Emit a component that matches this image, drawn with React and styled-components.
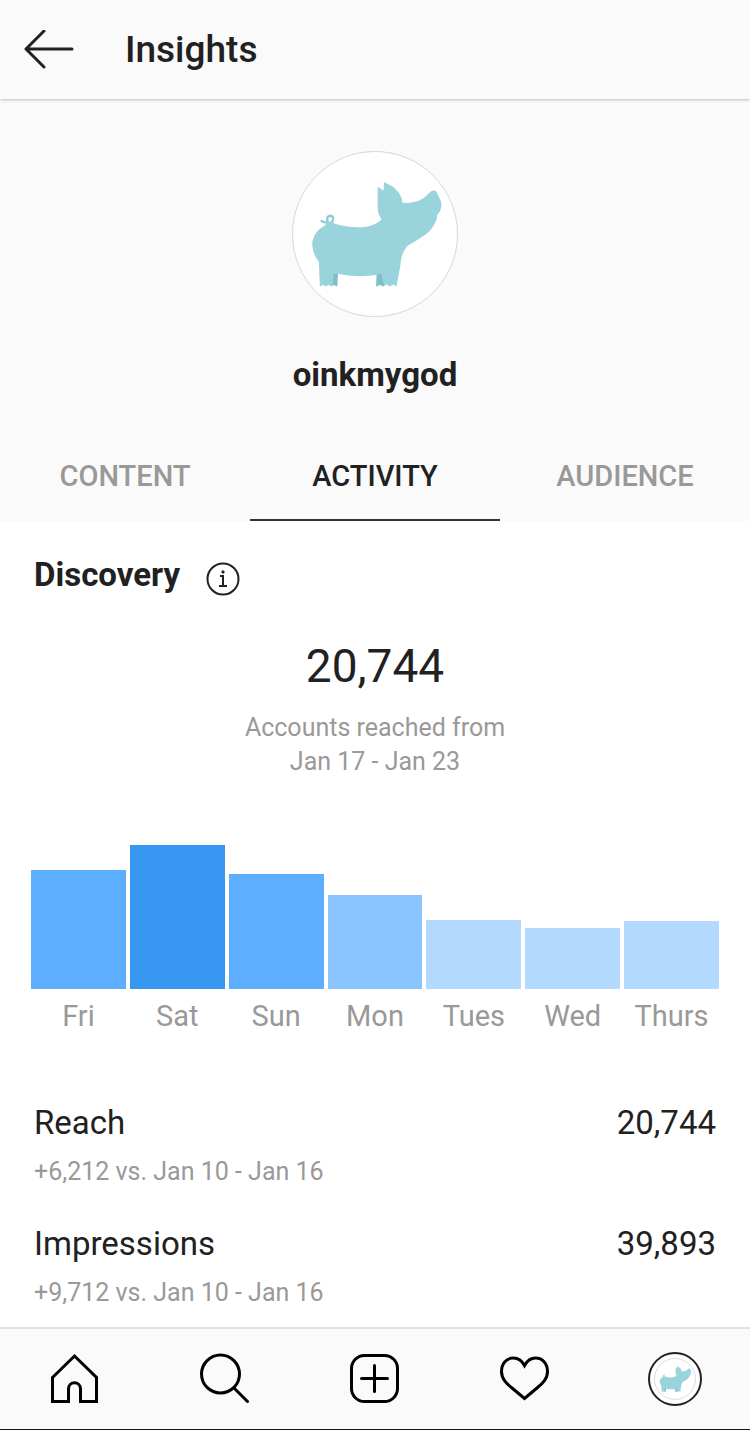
import React, { useState } from "react";
import styled, { createGlobalStyle } from "styled-components";

const GlobalStyle = createGlobalStyle`
  * {
    box-sizing: border-box;
  }
  body {
    margin: 0;
    background: #fff;
    color: #212121;
    font-family: Roboto, "Liberation Sans", sans-serif;
  }
  button {
    border: 0;
    padding: 0;
    background: none;
    color: inherit;
    font-family: inherit;
    cursor: pointer;
  }
  svg {
    display: block;
  }
`;

const Screen = styled.div`
  display: flex;
  flex-direction: column;
  min-height: 100vh;
`;

const Header = styled.header`
  display: flex;
  align-items: center;
  gap: 49px;
  height: 99px;
  padding: 0 24px;
  background: #fafafa;
  box-shadow: 0 1px 3px rgba(0, 0, 0, 0.24);
  z-index: 1;
`;

const Title = styled.h1`
  margin: 0;
  font-size: 37px;
  font-weight: 500;
  line-height: 48px;
`;

const Profile = styled.section`
  display: flex;
  flex-direction: column;
  align-items: center;
  gap: 36px;
  padding: 52px 0 34px;
  background: #fafafa;
`;

const Avatar = styled.div`
  width: 166px;
  height: 166px;
  border: 1px solid #d8d8d8;
  border-radius: 50%;
  background: #fff;
`;

const Username = styled.h2`
  margin: 0;
  font-size: 33px;
  font-weight: 700;
  line-height: 44px;
`;

const Tabs = styled.nav`
  display: grid;
  grid-template-columns: repeat(3, 1fr);
  background: #fafafa;
`;

const Tab = styled.button`
  height: 90px;
  padding-top: 2px;
  border-bottom: 2px solid ${props => (props.$active ? "#333" : "transparent")};
  color: ${props => (props.$active ? "#212121" : "#999")};
  font-size: 29px;
  font-weight: 500;
`;

const Content = styled.main`
  padding: 30px 31px 17px;
`;

const SectionHead = styled.div`
  display: flex;
  align-items: center;
  gap: 26px;
  padding-left: 3px;
`;

const SectionTitle = styled.h3`
  margin: 0;
  font-size: 33px;
  font-weight: 700;
  line-height: 48px;
`;

const InfoButton = styled.button`
  padding-top: 8px;
`;

const Summary = styled.div`
  padding: 35px 0 66px;
  text-align: center;
`;

const Total = styled.div`
  font-size: 46px;
  line-height: 64px;
`;

const Caption = styled.p`
  margin: 13px 0 0;
  color: #999;
  font-size: 25px;
  line-height: 34px;
`;

const Chart = styled.div`
  display: grid;
  grid-template-columns: repeat(7, 1fr);
  gap: 4px;
`;

const Day = styled.div`
  display: flex;
  flex-direction: column;
  justify-content: flex-end;
  height: 188px;
`;

const Bar = styled.div`
  background: ${props => props.$color};
`;

const DayLabel = styled.span`
  padding-top: 10px;
  color: #999;
  font-size: 29px;
  line-height: 34px;
  text-align: center;
`;

const Stats = styled.div`
  display: flex;
  flex-direction: column;
  gap: 33px;
  padding: 68px 3px 0;
`;

const StatRow = styled.div`
  display: flex;
  justify-content: space-between;
  font-size: 33px;
  line-height: 44px;
`;

const StatNote = styled.div`
  padding-top: 10px;
  color: #999;
  font-size: 25px;
  line-height: 34px;
`;

const BottomNav = styled.nav`
  display: grid;
  grid-template-columns: repeat(5, 1fr);
  height: 103px;
  margin-top: auto;
  border-top: 2px solid #e2e2e2;
  border-bottom: 1px solid #111;
  background: #fafafa;
`;

const NavButton = styled.button`
  display: flex;
  align-items: center;
  justify-content: center;
  color: #000;
`;

const ProfileRing = styled.span`
  display: grid;
  place-items: center;
  width: 54px;
  height: 54px;
  border: 2px solid #222;
  border-radius: 50%;
  background: #fff;
`;

const SmallAvatar = styled.span`
  width: 42px;
  height: 42px;
  border: 1px solid #ddd;
  border-radius: 50%;
`;

const days = [
  { name: "Fri", height: 119, color: "#5eaeff" },
  { name: "Sat", height: 144, color: "#3897f0" },
  { name: "Sun", height: 115, color: "#5eaeff" },
  { name: "Mon", height: 94, color: "#89c4ff" },
  { name: "Tues", height: 69, color: "#b3d9ff" },
  { name: "Wed", height: 61, color: "#b3d9ff" },
  { name: "Thurs", height: 68, color: "#b3d9ff" }
];

const stats = [
  { name: "Reach", value: "20,744", note: "+6,212 vs. Jan 10 - Jan 16" },
  { name: "Impressions", value: "39,893", note: "+9,712 vs. Jan 10 - Jan 16" }
];

const Pig = () => (
  <svg viewBox="38 35 494 494" width="100%" height="100%" aria-hidden="true">
    <path
      d="M122 241 Q132 250 146 245 M144 250 C137 236 142 227 151 227 C162 229 161 241 153 248"
      fill="none"
      stroke="#8fcbd5"
      strokeWidth="7"
    />
    <path
      d="M133 257 C140 250 144 243 151 245 C161 247 162 250 169 253 C198 262 235 264 258 260 C276 257 291 250 305 238 C294 222 292 210 293 194 L293 140 L311 151 L312 126 C340 136 366 158 368 188 C391 190 421 184 438 168 L453 154 C463 147 471 152 474 162 L484 184 C486 196 484 206 480 215 C471 222 472 232 470 240 C462 258 452 275 434 286 C415 299 399 309 384 317 C371 331 363 351 362 372 C359 393 354 414 350 440 L340 434 L330 440 L320 434 L309 440 L300 435 L289 440 L290 405 C252 412 209 410 173 402 L171 440 L161 435 L153 440 L145 435 L137 440 L128 435 L119 440 L116 366 C101 346 93 324 97 303 C101 282 115 266 133 257 Z"
      fill="#99d3dc"
    />
    <path
      d="M160 402 L173 402 L171 440 L161 435 L155 439 C160 427 160 415 160 402 M290 405 L304 400 C307 414 309 423 313 437 L309 440 L300 435 L289 440 Z"
      fill="#82bdc8"
    />
  </svg>
);

const BackIcon = () => (
  <svg width="52" height="40" fill="none" stroke="#212121" strokeWidth="3" strokeLinecap="round" strokeLinejoin="round">
    <path d="M20 1 L2 19 L20 37 M2 19 H48" />
  </svg>
);

const InfoIcon = () => (
  <svg width="34" height="34" fill="none" stroke="#212121" strokeWidth="2">
    <circle cx="17" cy="17" r="15.5" />
    <path d="M14 14 H17 V24 M13 24 H21" />
    <circle cx="17" cy="10" r="1.2" fill="#212121" stroke="#212121" strokeWidth="1" />
  </svg>
);

const NavIcon = ({ children }) => (
  <svg width="54" height="54" fill="none" stroke="currentColor" strokeWidth="3" strokeLinecap="round" strokeLinejoin="round">
    {children}
  </svg>
);

export default function App() {
  const [tab, setTab] = useState("ACTIVITY");

  return (
    <Screen>
      <GlobalStyle />
      <Header>
        <button aria-label="Back">
          <BackIcon />
        </button>
        <Title>Insights</Title>
      </Header>
      <Profile>
        <Avatar>
          <Pig />
        </Avatar>
        <Username>oinkmygod</Username>
      </Profile>
      <Tabs>
        {["CONTENT", "ACTIVITY", "AUDIENCE"].map(name => (
          <Tab key={name} $active={tab === name} onClick={() => setTab(name)}>
            {name}
          </Tab>
        ))}
      </Tabs>
      <Content>
        <SectionHead>
          <SectionTitle>Discovery</SectionTitle>
          <InfoButton aria-label="About discovery">
            <InfoIcon />
          </InfoButton>
        </SectionHead>
        <Summary>
          <Total>20,744</Total>
          <Caption>
            Accounts reached from
            <br />
            Jan 17 - Jan 23
          </Caption>
        </Summary>
        <Chart>
          {days.map(day => (
            <Day key={day.name}>
              <Bar $color={day.color} style={{ height: day.height }} />
              <DayLabel>{day.name}</DayLabel>
            </Day>
          ))}
        </Chart>
        <Stats>
          {stats.map(stat => (
            <div key={stat.name}>
              <StatRow>
                <span>{stat.name}</span>
                <span>{stat.value}</span>
              </StatRow>
              <StatNote>{stat.note}</StatNote>
            </div>
          ))}
        </Stats>
      </Content>
      <BottomNav>
        <NavButton aria-label="Home">
          <NavIcon>
            <path
              d="M4.5 25.5 L26.5 4 L48.5 25.5 V49.5 H32.5 V37 C32.5 28.5 20.5 28.5 20.5 37 V49.5 H4.5 Z"
              strokeLinejoin="miter"
            />
          </NavIcon>
        </NavButton>
        <NavButton aria-label="Search">
          <NavIcon>
            <circle cx="22.5" cy="22" r="19" />
            <path d="M36 36 L49.5 49.5" />
          </NavIcon>
        </NavButton>
        <NavButton aria-label="New post">
          <NavIcon>
            <rect x="3.5" y="3.5" width="46" height="46" rx="13" />
            <path d="M26.5 13.5 V39.5 M13.5 26.5 H39.5" />
          </NavIcon>
        </NavButton>
        <NavButton aria-label="Likes">
          <NavIcon>
            <path
              d="M26.5 13.5 C23.5 8 19.5 6 15.5 6 C8 6 3.5 12 3.5 19.5 C3.5 27 8.5 31.5 14 36 L26.5 46.5 L39 36 C44.5 31.5 49.5 27 49.5 19.5 C49.5 12 45 6 37.5 6 C33.5 6 29.5 8 26.5 13.5 Z"
              strokeLinejoin="miter"
            />
          </NavIcon>
        </NavButton>
        <NavButton aria-label="Profile">
          <ProfileRing>
            <SmallAvatar>
              <Pig />
            </SmallAvatar>
          </ProfileRing>
        </NavButton>
      </BottomNav>
    </Screen>
  );
}
